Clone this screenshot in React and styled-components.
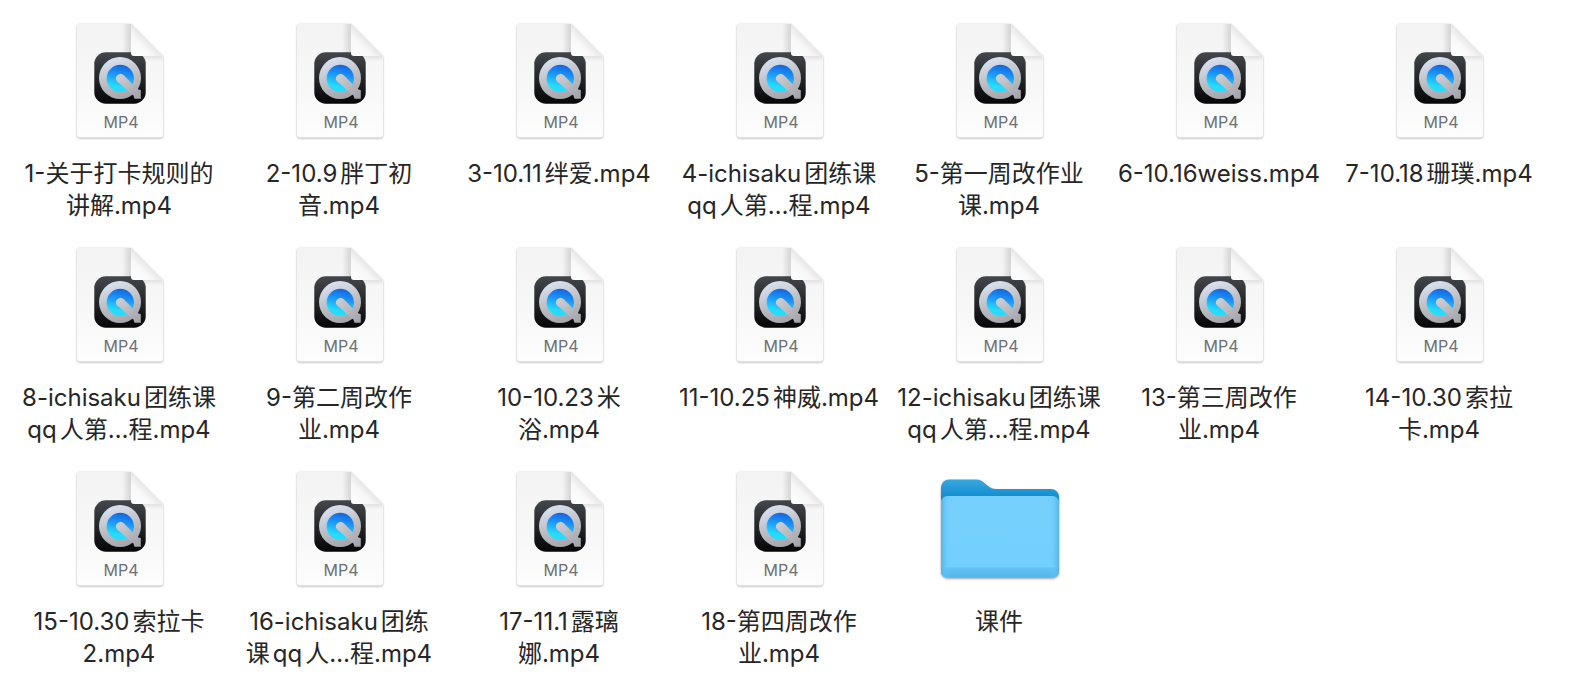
import React from "react";
import styled, { createGlobalStyle } from "styled-components";

const items = [
  { lines: ["1-关于打卡规则的", "讲解.mp4"] },
  { lines: ["2-10.9胖丁初", "音.mp4"] },
  { lines: ["3-10.11绊爱.mp4"] },
  { lines: ["4-ichisaku团练课", "qq人第…程.mp4"] },
  { lines: ["5-第一周改作业", "课.mp4"] },
  { lines: ["6-10.16weiss.mp4"] },
  { lines: ["7-10.18珊璞.mp4"] },
  { lines: ["8-ichisaku团练课", "qq人第…程.mp4"] },
  { lines: ["9-第二周改作", "业.mp4"] },
  { lines: ["10-10.23米", "浴.mp4"] },
  { lines: ["11-10.25神威.mp4"] },
  { lines: ["12-ichisaku团练课", "qq人第…程.mp4"] },
  { lines: ["13-第三周改作", "业.mp4"] },
  { lines: ["14-10.30索拉", "卡.mp4"] },
  { lines: ["15-10.30索拉卡", "2.mp4"] },
  { lines: ["16-ichisaku团练", "课qq人…程.mp4"] },
  { lines: ["17-11.1露璃", "娜.mp4"] },
  { lines: ["18-第四周改作", "业.mp4"] },
  { lines: ["课件"], folder: true },
];

// gradients are shared by every icon on the page
const IconDefs = () => (
  <HiddenSvg aria-hidden="true">
    <defs>
      <linearGradient id="paper" x1="0" y1="0" x2="0" y2="1">
        <stop offset="0" stopColor="#f3f3f3" />
        <stop offset="0.6" stopColor="#f8f8f8" />
        <stop offset="1" stopColor="#fdfdfd" />
      </linearGradient>
      <linearGradient id="foldShade" x1="0" y1="0" x2="1" y2="0">
        <stop offset="0" stopColor="#000" stopOpacity="0" />
        <stop offset="1" stopColor="#000" stopOpacity="0.13" />
      </linearGradient>
      <linearGradient id="foldShadeDown" x1="0" y1="0" x2="0" y2="1">
        <stop offset="0" stopColor="#000" stopOpacity="0.1" />
        <stop offset="1" stopColor="#000" stopOpacity="0" />
      </linearGradient>
      <linearGradient id="fold" x1="0" y1="1" x2="0.55" y2="0.45">
        <stop offset="0" stopColor="#ffffff" />
        <stop offset="0.6" stopColor="#f8f8f8" />
        <stop offset="1" stopColor="#e2e2e2" />
      </linearGradient>
      <linearGradient id="tile" x1="0" y1="0" x2="0" y2="1">
        <stop offset="0" stopColor="#43474b" />
        <stop offset="1" stopColor="#050506" />
      </linearGradient>
      <linearGradient id="ring" x1="0.3" y1="0" x2="0.6" y2="1">
        <stop offset="0" stopColor="#dce3f3" />
        <stop offset="0.5" stopColor="#bfc1c7" />
        <stop offset="1" stopColor="#a4a5aa" />
      </linearGradient>
      <linearGradient id="lens" x1="0.6" y1="0" x2="0.4" y2="1">
        <stop offset="0" stopColor="#1563dc" />
        <stop offset="0.4" stopColor="#1a98fb" />
        <stop offset="0.8" stopColor="#25dcff" />
      </linearGradient>
      <linearGradient
        id="tail"
        gradientUnits="userSpaceOnUse"
        x1="56"
        y1="64"
        x2="80"
        y2="88"
      >
        <stop offset="0" stopColor="#d0d1d6" />
        <stop offset="1" stopColor="#a2a3a8" />
      </linearGradient>
      <linearGradient id="folderBack" x1="0" y1="0" x2="0" y2="1">
        <stop offset="0" stopColor="#3ba7dc" />
        <stop offset="0.4" stopColor="#1490d4" />
      </linearGradient>
      <linearGradient id="folderFront" x1="0" y1="0" x2="0" y2="1">
        <stop offset="0" stopColor="#76d0fd" />
        <stop offset="0.86" stopColor="#72cffe" />
        <stop offset="0.88" stopColor="#62c2f3" />
        <stop offset="1" stopColor="#53b5e9" />
      </linearGradient>
      <linearGradient id="folderSides" x1="0" y1="0" x2="1" y2="0">
        <stop offset="0" stopColor="#55b5ea" />
        <stop offset="0.08" stopColor="#6fcdfd" stopOpacity="0" />
        <stop offset="0.92" stopColor="#6fcdfd" stopOpacity="0" />
        <stop offset="1" stopColor="#55b5ea" />
      </linearGradient>
    </defs>
  </HiddenSvg>
);

const VideoIcon = () => (
  <Icon viewBox="0 0 120 140" className="video">
    <path
      className="paper"
      d="M20 13.5H71L103 46V124.5a3 3 0 0 1-3 3H20a3 3 0 0 1-3-3V16.5a3 3 0 0 1 3-3Z"
      fill="url(#paper)"
    />
    <path d="M62 14H71V45H62Z" fill="url(#foldShade)" />
    <path d="M73 45H102L103 51H73Z" fill="url(#foldShadeDown)" />
    <rect x="34.3" y="42.3" width="51.4" height="51.4" rx="11.5" fill="url(#tile)" />
    <circle cx="60" cy="68" r="21" fill="url(#ring)" />
    <circle cx="60.3" cy="68.4" r="13.6" fill="url(#lens)" />
    <path
      d="M57.2 71.6a4.6 4.6 0 0 1 6.6-6.4L77.5 79l3.3 1.2V88.8H74.5L73.5 85.5Z"
      fill="url(#tail)"
    />
    <path d="M71 13.5L103 46H74a3 3 0 0 1-3-3Z" fill="url(#fold)" />
    <text x="61" y="118" textAnchor="middle">
      MP4
    </text>
  </Icon>
);

const FolderIcon = () => (
  <Icon viewBox="0 0 120 140" className="folder">
    <path
      d="M1 29.5a8 8 0 0 1 8-8H36c4 0 6 1.5 9 4l3 2.5c2.500 2 4.500 3 8 3H111a8 8 0 0 1 8 8V60H1Z"
      fill="url(#folderBack)"
    />
    <rect x="1" y="38" width="118" height="82" rx="7" fill="url(#folderFront)" />
    <rect x="1" y="38" width="118" height="82" rx="7" fill="url(#folderSides)" />
  </Icon>
);

const FileItem = ({ lines, folder }) => {
  return (
    <FileItemContainer>
      {folder ? <FolderIcon /> : <VideoIcon />}
      <FileName>
        {lines.map((line) => (
          <span key={line}>{line}</span>
        ))}
      </FileName>
    </FileItemContainer>
  );
};

const App = () => {
  return (
    <>
      <GlobalStyle />
      <IconDefs />
      <FileGrid>
        {items.map((item) => (
          <FileItem key={item.lines.join("")} {...item} />
        ))}
      </FileGrid>
    </>
  );
};

const GlobalStyle = createGlobalStyle`
  body {
    margin: 0;
    background: #ffffff;
    color: #262626;
    font-family: Inter, "Noto Sans CJK SC", sans-serif;
  }
`;

const HiddenSvg = styled.svg`
  position: absolute;
  width: 0;
  height: 0;
`;

const FileGrid = styled.ul`
  display: grid;
  grid-template-columns: repeat(auto-fill, 220px);
  row-gap: 12px;

  margin: 0;
  padding: 10px 0 10px 10px;
  list-style: none;
`;

const FileItemContainer = styled.li`
  display: flex;
  flex-direction: column;
  align-items: center;
  gap: 8px;
`;

const FileName = styled.div`
  display: flex;
  flex-direction: column;
  align-items: center;

  padding-right: 2px;

  font-size: 24px;
  line-height: 32px;
  white-space: nowrap;
  text-autospace: normal;
`;

const Icon = styled.svg`
  width: 120px;
  height: 140px;

  &.video .paper {
    filter: drop-shadow(0 1px 1px rgba(0, 0, 0, 0.3));
  }
  &.folder {
    filter: drop-shadow(0 1px 1px rgba(0, 0, 0, 0.35));
  }
  text {
    fill: #6f6f73;
    font-size: 16px;
  }
`;

export default App;
